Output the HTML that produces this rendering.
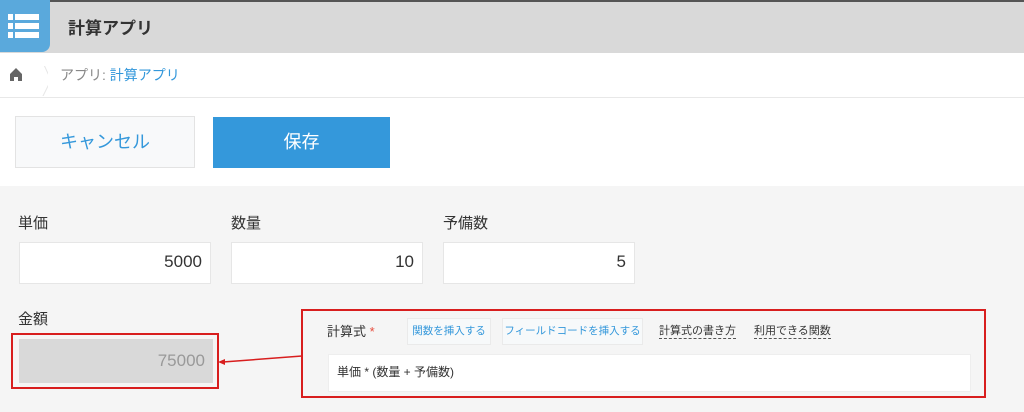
<!DOCTYPE html>
<html><head><meta charset="utf-8"><style>
body{margin:0;width:1024px;height:412px;overflow:hidden;background:#f5f5f5;font-family:"Liberation Sans","Noto Sans CJK JP",sans-serif;position:relative}
div{position:absolute;box-sizing:border-box}
.inp{background:#fff;border:1px solid #e6e6e6;font-size:17px;color:#333;text-align:right;padding-right:8px;line-height:38px}
.lbl{font-size:15px;color:#333}
</style></head><body>
<div style="left:0;top:0;width:1024px;height:53px;background:#d9d9d9;border-top:2px solid #555"></div>
<div style="left:0;top:0;width:50px;height:52px;background:#5aa9dc;border-radius:0 0 8px 0"></div>
<svg style="position:absolute;left:8px;top:14px" width="32" height="26"><g fill="#fff"><rect x="0" y="0" width="5" height="6"/><rect x="7" y="0" width="24" height="6"/><rect x="0" y="9" width="5" height="6"/><rect x="7" y="9" width="24" height="6"/><rect x="0" y="18" width="5" height="6"/><rect x="7" y="18" width="24" height="6"/></g></svg>
<div style="left:68px;top:14px;font-size:17px;font-weight:bold;color:#333">計算アプリ</div>
<div style="left:0;top:53px;width:1024px;height:45px;background:#fff;border-bottom:1px solid #e8e8e8"></div>
<svg style="position:absolute;left:8px;top:66px" width="40" height="30"><path d="M2 8 L8 2 L14 8 L14 15 L10 15 L10 11 L6 11 L6 15 L2 15Z" fill="#666"/><path d="M30 -14 L43 14 L30 40" fill="none" stroke="#e6e6e6"/></svg>
<div style="left:60px;top:65px;font-size:14px;color:#888">アプリ: <span style="color:#3498db">計算アプリ</span></div>
<div style="left:0;top:98px;width:1024px;height:88px;background:#fff"></div>
<div style="left:15px;top:116px;width:180px;height:52px;border:1px solid #e3e3e3;background:#f8f9fa;color:#3498db;font-size:18px;text-align:center;line-height:50px">キャンセル</div>
<div style="left:213px;top:117px;width:177px;height:51px;background:#3498db;color:#fff;font-size:18px;text-align:center;line-height:51px">保存</div>
<div class="lbl" style="left:18px;top:212px">単価</div>
<div class="lbl" style="left:231px;top:212px">数量</div>
<div class="lbl" style="left:443px;top:212px">予備数</div>
<div class="inp" style="left:19px;top:242px;width:192px;height:42px">5000</div>
<div class="inp" style="left:231px;top:242px;width:192px;height:42px">10</div>
<div class="inp" style="left:443px;top:242px;width:192px;height:42px">5</div>
<div class="lbl" style="left:18px;top:308px">金額</div>
<div style="left:11px;top:333px;width:208px;height:56px;border:2px solid #d81e1e"></div>
<div class="inp" style="left:19px;top:339px;width:194px;height:44px;background:#d9d9d9;color:#999;border:none;line-height:44px">75000</div>
<svg style="position:absolute;left:215px;top:350px" width="90" height="20"><path d="M87 6 L8 12" stroke="#d81e1e" stroke-width="1.5"/><path d="M3 12 L10 9 L10 15Z" fill="#d81e1e"/></svg>
<div style="left:301px;top:309px;width:685px;height:89px;border:2px solid #d81e1e"></div>
<div style="left:327px;top:321px;font-size:13px;color:#333">計算式 <span style="color:#e74c3c">*</span></div>
<div style="left:407px;top:318px;width:84px;height:27px;background:#f7f9fa;border:1px solid #eaeaea;font-size:10.5px;color:#3498db;text-align:center;line-height:25px">関数を挿入する</div>
<div style="left:502px;top:318px;width:141px;height:27px;background:#f7f9fa;border:1px solid #eaeaea;font-size:10.5px;color:#3498db;text-align:center;line-height:25px">フィールドコードを挿入する</div>
<div style="left:659px;top:322px;font-size:11px;color:#333;border-bottom:1px dashed #555">計算式の書き方</div>
<div style="left:754px;top:322px;font-size:11px;color:#333;border-bottom:1px dashed #555">利用できる関数</div>
<div style="left:328px;top:354px;width:643px;height:38px;background:#fff;border:1px solid #eee;font-size:12px;color:#333;padding-left:8px;line-height:34px">単価 * (数量 + 予備数)</div>
</body></html>
